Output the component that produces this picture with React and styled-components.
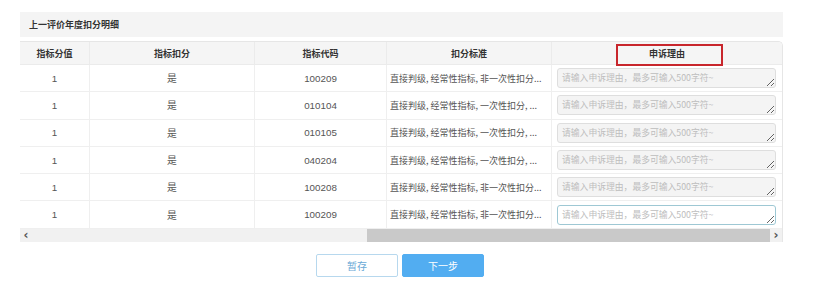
import styled, { createGlobalStyle } from "styled-components";

const GlobalStyle = createGlobalStyle`
  body {
    margin: 0;
    background: #fff;
    font-family: "Liberation Sans", "Noto Sans CJK SC", sans-serif;
  }
`;

const rows = [
  { code: "100209", rule: "直接判级, 经常性指标, 非一次性扣分..." },
  { code: "010104", rule: "直接判级, 经常性指标, 一次性扣分, ..." },
  { code: "010105", rule: "直接判级, 经常性指标, 一次性扣分, ..." },
  { code: "040204", rule: "直接判级, 经常性指标, 一次性扣分, ..." },
  { code: "100208", rule: "直接判级, 经常性指标, 非一次性扣分..." },
  { code: "100209", rule: "直接判级, 经常性指标, 非一次性扣分..." },
];

const App = () => {
  return (
    <Page>
      <GlobalStyle />
      <TitleBar>上一评价年度扣分明细</TitleBar>
      <TableBox>
        <Grid>
          <HeadCell>指标分值</HeadCell>
          <HeadCell>指标扣分</HeadCell>
          <HeadCell>指标代码</HeadCell>
          <HeadCell>扣分标准</HeadCell>
          <HeadCell $last>
            申诉理由
            <Marker />
          </HeadCell>
          {rows.map((row, i) => (
            <Row key={i}>
              <Cell>1</Cell>
              <Cell>是</Cell>
              <Cell>{row.code}</Cell>
              <Cell $left>
                <Ellipsis>{row.rule}</Ellipsis>
              </Cell>
              <Cell $last $pad>
                <Reason
                  $active={i === rows.length - 1}
                  placeholder="请输入申诉理由，最多可输入500字符~"
                />
              </Cell>
            </Row>
          ))}
        </Grid>
        <ScrollBar>
          <Arrow>‹</Arrow>
          <Track />
          <Thumb />
          <Arrow>›</Arrow>
        </ScrollBar>
      </TableBox>
      <Actions>
        <Button>暂存</Button>
        <Button $primary>下一步</Button>
      </Actions>
    </Page>
  );
};

const Page = styled.div`
  width: 763px;
  padding: 12px 0 0 20px;
`;

const TitleBar = styled.div`
  height: 25px;
  background: #f4f4f4;
  padding-left: 9px;
  display: flex;
  align-items: center;
  font-family: "Noto Sans CJK SC", sans-serif;
  font-size: 9px;
  font-weight: 700;
  color: #333;
`;

const TableBox = styled.div`
  margin-top: 4px;
  border-top: 1px solid #e6e6e6;
  border-right: 1px solid #e6e6e6;
  border-top-right-radius: 5px;
  overflow: hidden;
`;

const Grid = styled.div`
  display: grid;
  grid-template-columns: 70px 165px 132px 165px 1fr;
  grid-template-rows: 23px;
  grid-auto-rows: 27.3px;
`;

const Row = styled.div`
  display: contents;
`;

const HeadCell = styled.div`
  position: relative;
  background: #f5f5f5;
  border-right: ${(p) => (p.$last ? "none" : "1px solid #ebebeb")};
  border-bottom: 1px solid #ebebeb;
  display: flex;
  align-items: center;
  justify-content: center;
  font-family: "Noto Sans CJK SC", sans-serif;
  font-size: 9px;
  font-weight: 700;
  color: #333;
`;

const Marker = styled.span`
  position: absolute;
  left: 64px;
  top: 2px;
  width: 107px;
  height: 22px;
  box-sizing: border-box;
  border: 2px solid #c8262c;
`;

const Cell = styled.div`
  box-sizing: border-box;
  border-right: ${(p) => (p.$last ? "none" : "1px solid #efefef")};
  border-bottom: 1px solid #efefef;
  display: flex;
  align-items: center;
  justify-content: ${(p) => (p.$left ? "flex-start" : "center")};
  padding: ${(p) => (p.$pad ? "0 6px 0 5px" : p.$left ? "0 3px 0 3px" : "0")};
  min-width: 0;
  font-family: "Liberation Sans", "Noto Sans CJK SC", sans-serif;
  font-size: 9.8px;
  color: #555;
`;

const Ellipsis = styled.span`
  display: block;
  white-space: nowrap;
  overflow: hidden;
  text-overflow: ellipsis;
  font-family: "Noto Sans CJK SC", sans-serif;
  font-size: 9px;
`;

const Reason = styled.textarea`
  width: 100%;
  height: 20px;
  box-sizing: border-box;
  margin: 0;
  padding: 3px 4px;
  border: 1px solid ${(p) => (p.$active ? "#9ec8d4" : "#dedede")};
  border-radius: 3px;
  background: ${(p) => (p.$active ? "#fff" : "#f4f4f4")};
  font-family: "Noto Sans CJK SC", sans-serif;
  font-size: 8.8px;
  line-height: 12px;
  color: #555;
  outline: none;
  overflow: hidden;

  &::placeholder {
    color: #bdbdbd;
  }
`;

const ScrollBar = styled.div`
  display: flex;
  align-items: stretch;
  height: 13px;
  background: #f1f1f1;
`;

const Arrow = styled.div`
  width: 12px;
  display: flex;
  align-items: center;
  justify-content: center;
  font-family: "DejaVu Sans", sans-serif;
  font-size: 12px;
  font-weight: 700;
  line-height: 1;
  color: #555;
`;

const Track = styled.div`
  flex: 1;
`;

const Thumb = styled.div`
  width: 403px;
  background: #c9c9c9;
`;

const Actions = styled.div`
  display: flex;
  justify-content: center;
  gap: 4px;
  margin-top: 12px;
  padding-right: 3px;
`;

const Button = styled.button`
  width: 82px;
  height: 23px;
  box-sizing: border-box;
  border: 1px solid ${(p) => (p.$primary ? "#52adf1" : "#b7d8ee")};
  border-radius: 2px;
  background: ${(p) => (p.$primary ? "#52adf1" : "#fff")};
  color: ${(p) => (p.$primary ? "#fff" : "#6aa9d6")};
  font-family: "Noto Sans CJK SC", sans-serif;
  font-size: 10px;
  cursor: pointer;
`;

export default App;
